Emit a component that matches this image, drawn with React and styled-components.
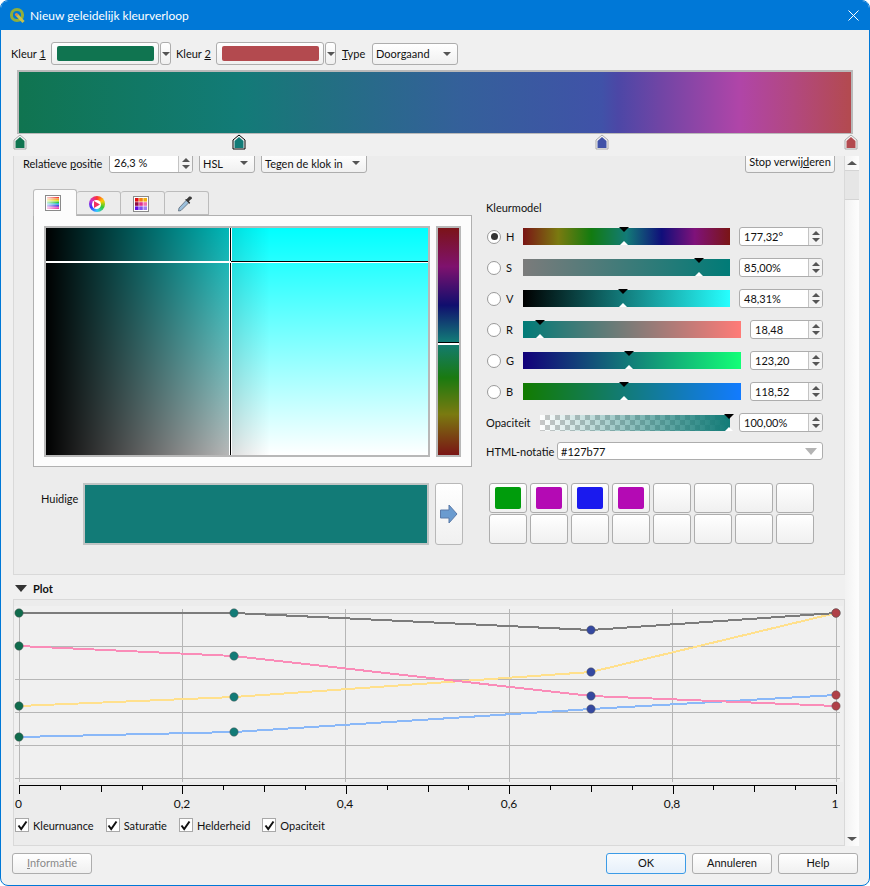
import React from 'react';
import styled, { createGlobalStyle } from 'styled-components';

const GlobalStyle = createGlobalStyle`
  html, body { margin: 0; padding: 0; background: #fff; }
  body { font-family: Lato, "Noto Sans", sans-serif; font-size: 11px; color: #111; }
  * { box-sizing: border-box; }
`;

const Window = styled.div`
  width: 870px;
  height: 886px;
  display: flex;
  flex-direction: column;
  background: #f0f0f0;
  border: 1px solid #0078d7;
  border-radius: 8px;
  overflow: hidden;
`;

const TitleBar = styled.div`
  flex: none;
  height: 30px;
  margin-top: -1px;
  display: flex;
  align-items: center;
  gap: 4px;
  padding: 0 10px 0 8px;
  background: #0078d7;
  color: #fff;
  font-size: 12px;
`;

const TitleText = styled.span`
  flex: 1;
`;

const TopRow = styled.div`
  flex: none;
  display: flex;
  align-items: center;
  height: 23px;
  margin-top: 12px;
  padding-left: 10px;
`;

const RowLabel = styled.span`
  width: ${p => p.$width}px;
  flex: none;
  white-space: nowrap;
`;

const ColorButton = styled.div`
  width: 108px;
  height: 23px;
  padding: 3px 4px 3px 5px;
  margin-right: 1px;
  background: linear-gradient(#fff, #f0f0f0);
  border: 1px solid #adadad;
  border-radius: 3px;
`;

const ColorFill = styled.div`
  height: 100%;
  border-radius: 2px;
  background: ${p => p.$color};
`;

const DropButton = styled.div`
  width: 11px;
  height: 23px;
  margin-right: ${p => p.$gap}px;
  display: flex;
  align-items: center;
  justify-content: center;
  background: linear-gradient(#fff, #f0f0f0);
  border: 1px solid #adadad;
  border-radius: 3px;
`;

const Arrow = styled.i`
  display: block;
  flex: none;
  width: 0;
  height: 0;
  border-left: ${p => p.$size || 4}px solid transparent;
  border-right: ${p => p.$size || 4}px solid transparent;
  border-top: ${p => p.$h || 4}px solid ${p => p.$color || '#555'};
  border-bottom: 0;
`;

const ArrowUp = styled(Arrow)`
  border-top: 0;
  border-bottom: ${p => p.$h || 4}px solid ${p => p.$color || '#555'};
`;

const Combo = styled.div`
  width: ${p => p.$width}px;
  height: ${p => p.$height || 20}px;
  margin-right: ${p => p.$gap || 0}px;
  flex: none;
  display: flex;
  align-items: center;
  justify-content: space-between;
  padding: 0 6px 0 3px;
  background: linear-gradient(#fff, #f0f0f0);
  border: 1px solid #adadad;
  border-radius: 3px;
  white-space: nowrap;
`;

const GradientBar = styled.div`
  flex: none;
  width: 836px;
  height: 64px;
  margin: 5px 0 0 16px;
  border: 2px solid #b9b9b9;
  border-bottom-width: 1px;
  background: linear-gradient(to right,
    #107450 0%, #127b77 26.4%, #20717f 35%, #34609a 53%, #4052a8 70%, #4c47a6 72%,
    #7045a5 77%, #b045a8 86.6%, #b24880 93%, #b34a4f 100%);
`;

const StopTrack = styled.div`
  flex: none;
  position: relative;
  height: 16px;
  margin: 0 0 6px 0;
`;

const StopMarker = styled.svg`
  position: absolute;
  top: 0;
  left: ${p => p.$x - 7}px;
`;

const Middle = styled.div`
  flex: 1;
  min-height: 0;
  display: flex;
  padding: 0 10px 0 12px;
`;

const ScrollArea = styled.div`
  flex: none;
  width: 832px;
  height: 690px;
  overflow: hidden;
  display: flex;
  flex-direction: column;
`;

const Upper = styled.div`
  flex: none;
  height: 419px;
  background: #ececec;
  border: 1px solid #d9d9d9;
  border-top: 0;
`;

const OptionsRow = styled.div`
  display: flex;
  align-items: center;
  height: 20px;
  margin-top: -3px;
  padding: 0 9px;
`;

const StopButton = styled.div`
  margin-left: auto;
  width: 90px;
  height: 20px;
  text-align: center;
  line-height: 16px;
  background: linear-gradient(#fff, #f0f0f0);
  border: 1px solid #adadad;
  border-radius: 3px;
  white-space: nowrap;
`;

const Columns = styled.div`
  display: flex;
  gap: 14px;
  margin-top: 16px;
  padding-left: 19px;
`;

const LeftColumn = styled.div`
  width: 439px;
  flex: none;
`;

const TabBar = styled.div`
  display: flex;
  align-items: flex-end;
  height: 26px;
`;

const Tab = styled.div`
  position: relative;
  width: 44px;
  height: ${p => (p.$active ? 27 : 24)}px;
  margin-bottom: ${p => (p.$active ? -1 : 0)}px;
  padding: ${p => (p.$active ? 5 : 4)}px 4px 0 0;
  display: flex;
  justify-content: center;
  background: ${p => (p.$active ? '#fcfcfc' : '#ececec')};
  border: 1px solid #bcbcbc;
  border-bottom: ${p => (p.$active ? 0 : '1px solid #bcbcbc')};
  border-left: ${p => (p.$active ? '1px solid #bcbcbc' : 0)};
  border-radius: 3px 3px 0 0;
  z-index: ${p => (p.$active ? 1 : 0)};
`;

const Wheel = styled.div`
  width: 16px;
  height: 16px;
  border-radius: 50%;
  display: flex;
  align-items: center;
  justify-content: center;
  background: conic-gradient(#f33, #fc0, #3c3, #3cf, #33f, #c3c, #f33);
`;

const WheelCenter = styled.div`
  width: 9px;
  height: 9px;
  border-radius: 50%;
  background: #fff;
  display: flex;
  align-items: center;
  justify-content: center;
`;

const TabPane = styled.div`
  height: 252px;
  display: flex;
  gap: 6px;
  padding: 10px 10px 9px;
  background: #fcfcfc;
  border: 1px solid #b0b0b0;
`;

const BoxFrame = styled.div`
  position: relative;
  width: 386px;
  height: 231px;
  border: 2px solid #b8b8b8;
  background:
    linear-gradient(to right, #000 0, rgba(0,0,0,.28) 48%, rgba(0,0,0,.13) 48.8%, rgba(0,0,0,0) 58.6%),
    linear-gradient(to bottom, #00ffff, #fff);
`;

const CrossV = styled.div`
  position: absolute;
  top: 0;
  bottom: 0;
  left: 183px;
  width: 3px;
  background: linear-gradient(to right, #fff 33%, #000 33%, #000 66%, #fff 66%);
`;

const CrossH = styled.div`
  position: absolute;
  left: 0;
  right: 0;
  top: 33px;
  height: 2px;
  background:
    linear-gradient(to right, #fff 48.5%, #000 48.5%) top / 100% 1px no-repeat,
    #fff;
`;

const HueFrame = styled.div`
  position: relative;
  width: 25px;
  height: 231px;
  border: 2px solid #b8b8b8;
  background: linear-gradient(to bottom,
    #7b1318 0%, #7f126e 17%, #100e6e 34%, #127b77 50%, #1a7a10 66%, #7a7a10 82%, #7a1515 100%);
`;

const HueMark = styled.div`
  position: absolute;
  left: 0;
  right: 0;
  top: 114px;
  height: 3px;
  background: linear-gradient(#000 33%, #fff 33%);
`;

const CurrentRow = styled.div`
  display: flex;
  margin-top: 16px;
  padding-left: 8px;
`;

const CurrentLabel = styled.span`
  width: 42px;
  flex: none;
  padding-top: 9px;
`;

const Preview = styled.div`
  width: 346px;
  height: 62px;
  flex: none;
  background: #127b77;
  border: 2px solid #c0c4c4;
`;

const ArrowButton = styled.div`
  width: 28px;
  height: 62px;
  flex: none;
  margin-left: 6px;
  display: flex;
  align-items: center;
  justify-content: center;
  background: linear-gradient(#fff, #f0f0f0);
  border: 1px solid #b8b8b8;
  border-radius: 3px;
`;

const RightColumn = styled.div`
  width: 337px;
  flex: none;
`;

const ModelTitle = styled.div`
  height: 20px;
  margin: 10px 0 8px;
  line-height: 18px;
`;

const ModelRow = styled.div`
  display: flex;
  align-items: center;
  height: 19px;
  margin-bottom: 12px;
`;

const Radio = styled.span`
  width: 14px;
  height: 14px;
  flex: none;
  margin-left: 1px;
  display: flex;
  align-items: center;
  justify-content: center;
  border: 1px solid #9a9a9a;
  border-radius: 50%;
  background: #fff;
`;

const RadioDot = styled.span`
  width: 7px;
  height: 7px;
  border-radius: 50%;
  background: #333;
`;

const ChannelName = styled.span`
  width: 22px;
  flex: none;
  padding-left: 5px;
`;

const SliderBar = styled.div`
  position: relative;
  flex: 1;
  height: 17px;
  margin-right: 9px;
  background: ${p => p.$bg};
`;

const OpacityBar = styled(SliderBar)`
  height: 16px;
  background:
    linear-gradient(to right, rgba(18,123,119,0), #127b77),
    conic-gradient(#c8c8c8 25%, #fff 25% 50%, #c8c8c8 50% 75%, #fff 75%) 0 0 / 10px 10px;
`;

const ThumbTop = styled.i`
  position: absolute;
  top: -1px;
  left: ${p => p.$pos - 5}px;
  width: 0;
  height: 0;
  border-left: 5px solid transparent;
  border-right: 5px solid transparent;
  border-top: 5px solid #000;
`;

const ThumbBottom = styled.i`
  position: absolute;
  bottom: 0;
  left: ${p => p.$pos - 4}px;
  width: 0;
  height: 0;
  border-left: 4px solid transparent;
  border-right: 4px solid transparent;
  border-bottom: 4px solid #fff;
`;

const Spin = styled.div`
  width: ${p => p.$width}px;
  height: ${p => p.$height || 19}px;
  margin-right: ${p => p.$gap || 0}px;
  flex: none;
  display: flex;
  background: #fff;
  border: 1px solid #adadad;
  border-radius: 3px;
  overflow: hidden;
`;

const SpinText = styled.span`
  flex: 1;
  padding-left: 4px;
  line-height: 17px;
  white-space: nowrap;
`;

const SpinButtons = styled.span`
  width: 14px;
  flex: none;
  display: flex;
  flex-direction: column;
  align-items: center;
  justify-content: center;
  gap: 3px;
  background: #f3f3f3;
  border-left: 1px solid #c4c4c4;
`;

const OpacityLabel = styled.span`
  width: 54px;
  flex: none;
`;

const HtmlRow = styled.div`
  display: flex;
  align-items: center;
  height: 18px;
  margin-top: -2px;
`;

const HtmlLabel = styled.span`
  width: 71px;
  flex: none;
  white-space: nowrap;
`;

const HtmlField = styled.div`
  flex: 1;
  height: 18px;
  display: flex;
  align-items: center;
  justify-content: space-between;
  padding: 0 5px 0 3px;
  background: #fff;
  border: 1px solid #adadad;
  border-radius: 3px;
`;

const SwatchGrid = styled.div`
  display: grid;
  grid-template-columns: repeat(8, 38px);
  grid-auto-rows: 30px;
  column-gap: 3px;
  row-gap: 1px;
  margin: 23px 0 0 3px;
`;

const Swatch = styled.div`
  padding: 3px 5px;
  background: linear-gradient(#fff, #f0f0f0);
  border: 1px solid #adadad;
  border-radius: 3px;
`;

const PlotHeader = styled.div`
  flex: none;
  height: 24px;
  display: flex;
  align-items: center;
  gap: 6px;
  padding: 3px 0 0 2px;
  font-weight: 700;
`;

const PlotBox = styled.div`
  flex: none;
  height: 247px;
  background: #ececec;
  border: 1px solid #d9d9d9;
`;

const PlotSvg = styled.svg`
  display: block;
`;

const CheckRow = styled.div`
  display: flex;
  align-items: center;
  height: 20px;
  padding-left: 1px;
`;

const CheckItem = styled.label`
  display: flex;
  align-items: center;
  gap: 4px;
  margin-right: 12px;
  white-space: nowrap;
`;

const CheckBox = styled.span`
  width: 14px;
  height: 14px;
  display: flex;
  align-items: center;
  justify-content: center;
  background: #fff;
  border: 1px solid #a8a8a8;
`;

const ScrollBar = styled.div`
  flex: none;
  width: 14px;
  height: 690px;
  display: flex;
  flex-direction: column;
  background: linear-gradient(to right, #f2f2f2, #fdfdfd);
`;

const ScrollButton = styled.div`
  height: 14px;
  flex: none;
  display: flex;
  align-items: center;
  justify-content: center;
`;

const ScrollThumb = styled.div`
  height: 30px;
  flex: none;
  background: #e6e6e6;
  border-top: 1px solid #d4d4d4;
  border-bottom: 1px solid #d4d4d4;
`;

const ScrollGap = styled.div`
  flex: 1;
`;

const Footer = styled.div`
  flex: none;
  display: flex;
  gap: 6px;
  height: 21px;
  margin: 7px 0 11px;
  padding: 0 11px;
`;

const FooterButton = styled.div`
  width: 80px;
  height: 21px;
  text-align: center;
  line-height: 18px;
  background: ${p => (p.$primary ? 'linear-gradient(#f8fbfe, #e6f0fa)' : 'linear-gradient(#fff, #f0f0f0)')};
  border: 1px solid ${p => (p.$primary ? '#3c9be6' : '#adadad')};
  border-radius: 3px;
  color: ${p => (p.$disabled ? '#8a8a8a' : '#111')};
  margin-right: ${p => (p.$push ? 'auto' : 0)};
`;

function QgisLogo() {
  return (
    <svg width="17" height="17" viewBox="0 0 17 17">
      <circle cx="8" cy="8" r="5.6" fill="none" stroke="#8fae3c" strokeWidth="3" />
      <path d="M8 8 L14.5 15" stroke="#c9c24a" strokeWidth="3" />
      <circle cx="7.5" cy="7.5" r="1.6" fill="#e08a3c" />
    </svg>
  );
}

function CloseIcon() {
  return (
    <svg width="11" height="11" viewBox="0 0 11 11">
      <path d="M0.5 0.5 L10.5 10.5 M10.5 0.5 L0.5 10.5" stroke="#fff" strokeWidth="1" />
    </svg>
  );
}

function Stop({ x, color, line = '#aaa' }) {
  return (
    <StopMarker $x={x} width="14" height="16" viewBox="0 0 14 16">
      <path d="M7 1 L13 6 L13 15 L1 15 L1 6 Z" fill="#f4f4f4" stroke={line} strokeWidth="1" />
      <path d="M7 3 L11.5 7 L11.5 14 L2.5 14 L2.5 7 Z" fill={color} />
    </StopMarker>
  );
}

function SpinBox({ value, width, height, gap }) {
  return (
    <Spin $width={width} $height={height} $gap={gap}>
      <SpinText>{value}</SpinText>
      <SpinButtons>
        <ArrowUp $size={4} />
        <Arrow $size={4} />
      </SpinButtons>
    </Spin>
  );
}

function GradientIcon() {
  const rows = ['#f03030', '#f0a020', '#e0e020', '#30c030', '#20c0c0', '#3050e0', '#a030d0', '#f030a0'];
  return (
    <svg width="16" height="16" viewBox="0 0 16 16">
      <defs>
        <linearGradient id="washout" x1="0" x2="1" y1="0" y2="0">
          <stop offset="0" stopColor="#fff" stopOpacity="0.75" />
          <stop offset="1" stopColor="#fff" stopOpacity="0" />
        </linearGradient>
      </defs>
      <rect width="16" height="16" fill="#fff" />
      {rows.map((c, i) => (
        <rect key={c} x="2" y={2 + i * 1.5} width="12" height="1.5" fill={c} />
      ))}
      <rect x="2" y="2" width="12" height="12" fill="url(#washout)" />
      <rect x="0.5" y="0.5" width="15" height="15" fill="none" stroke="#8a8a8a" />
    </svg>
  );
}

function PaletteIcon() {
  const cells = ['#e01010', '#f08010', '#f0b010', '#901040', '#e03090', '#f070b0', '#6010e0', '#8050f0', '#a080f0'];
  return (
    <svg width="16" height="16" viewBox="0 0 16 16">
      <rect width="16" height="16" fill="#fff" />
      {cells.map((c, i) => (
        <rect key={i} x={2 + (i % 3) * 4.2} y={2 + Math.floor(i / 3) * 4.2} width="3.6" height="3.6" fill={c} />
      ))}
      <rect x="0.5" y="0.5" width="15" height="15" fill="none" stroke="#8a8a8a" />
    </svg>
  );
}

function DropperIcon() {
  return (
    <svg width="16" height="16" viewBox="0 0 16 16">
      <path d="M9.5 4 L12 6.5 L4 14.5 L1.5 15 L2 12 Z" fill="#9cc0dc" stroke="#5a6a78" strokeWidth="0.8" />
      <path d="M8 3.5 L12.5 8 L13.2 6.6 L11.8 5.2 L15 2.6 A2 2 0 0 0 12.2 0.6 L9.8 3 Z" fill="#3a3a3a" />
    </svg>
  );
}

const channels = [
  { name: 'H', checked: true, pos: 101, spin: '177,32°', w: 84,
    bg: 'linear-gradient(to right, #7a1515, #7a7a10 17%, #127b10 33%, #127b77 50%, #100e7a 67%, #7f127a 83%, #7a1515)' },
  { name: 'S', pos: 176, spin: '85,00%', w: 84, bg: 'linear-gradient(to right, #7b7b7b, #007b77)' },
  { name: 'V', pos: 100, spin: '48,31%', w: 84, bg: 'linear-gradient(to right, #000, #26ffff)' },
  { name: 'R', pos: 17, spin: '18,48', w: 73, bg: 'linear-gradient(to right, #007b77, #ff7b77)' },
  { name: 'G', pos: 106, spin: '123,20', w: 73, bg: 'linear-gradient(to right, #12007a, #12ff77)' },
  { name: 'B', pos: 101, spin: '118,52', w: 73, bg: 'linear-gradient(to right, #127b00, #127bff)' },
];

const swatches = ['#009c0c', '#b40ab4', '#1a1aee', '#b40ab4', null, null, null, null, null, null, null, null, null, null, null, null];

const stopsX = [19, 234, 591, 836];
const stopColors = ['#0f6b4c', '#127b77', '#3448a0', '#b04048'];
const series = [
  { color: '#ffe08c', y: [706, 697, 672, 613] },
  { color: '#8ab8f8', y: [737, 732, 709, 695] },
  { color: '#fa8cb8', y: [646, 656, 696, 706] },
  { color: '#7c7c7c', y: [613, 613, 630, 613] },
];
const gridY = [613, 646, 679, 712, 745, 778];
const gridX = [19, 182, 345, 509, 672, 836];
const axisLabels = ['0', '0,2', '0,4', '0,6', '0,8', '1'];
const ticks = Array.from({ length: 21 }, (_, i) => i);

function Plot() {
  return (
    <PlotSvg width="829" height="215" viewBox="14 600 829 215">
      <rect x="14" y="606" width="829" height="176" fill="#f0f0f0" />
      {gridY.map(y => (
        <line key={y} x1="15" x2="840" y1={y + 0.5} y2={y + 0.5} stroke="#b6b6b6" />
      ))}
      {gridX.map(x => (
        <line key={x} x1={x + 0.5} x2={x + 0.5} y1="609" y2="782" stroke="#b6b6b6" />
      ))}
      {series.map(s => (
        <polyline
          key={s.color}
          points={s.y.map((y, i) => `${stopsX[i]},${y}`).join(' ')}
          fill="none"
          stroke={s.color}
          strokeWidth="2"
          shapeRendering="crispEdges"
        />
      ))}
      {series.map(s => s.y.map((y, i) => (
        <circle key={`${s.color}${i}`} cx={stopsX[i]} cy={y} r="4.2" fill={stopColors[i]} stroke="#555" strokeOpacity="0.45" />
      )))}
      <line x1="19" x2="837" y1="785.5" y2="785.5" stroke="#000" />
      {ticks.map(i => {
        const x = Math.round(19 + i * 40.85) + 0.5;
        const len = i % 4 === 0 ? 9 : i % 2 === 0 ? 7 : 5;
        return <line key={i} x1={x} x2={x} y1="785" y2={785 + len} stroke="#000" />;
      })}
      {axisLabels.map((t, i) => (
        <text
          key={t}
          x={i === 0 ? 18.5 : i === 5 ? 835 : gridX[i]}
          y="808"
          textAnchor="middle"
          fontSize="12"
          fontFamily="Lato, sans-serif"
          fill="#111"
        >
          {t}
        </text>
      ))}
    </PlotSvg>
  );
}

export default function App() {
  return (
    <>
      <GlobalStyle />
      <Window>
        <TitleBar>
          <QgisLogo />
          <TitleText>Nieuw geleidelijk kleurverloop</TitleText>
          <CloseIcon />
        </TitleBar>

        <TopRow>
          <RowLabel $width={40}>Kleur <u>1</u></RowLabel>
          <ColorButton><ColorFill $color="#107450" /></ColorButton>
          <DropButton $gap={5}><Arrow $size={4} /></DropButton>
          <RowLabel $width={40}>Kleur <u>2</u></RowLabel>
          <ColorButton><ColorFill $color="#b34a4f" /></ColorButton>
          <DropButton $gap={6}><Arrow $size={4} /></DropButton>
          <RowLabel $width={30}><u>T</u>ype</RowLabel>
          <Combo $width={86} $height={22}>Doorgaand <Arrow $size={4} /></Combo>
        </TopRow>

        <GradientBar />
        <StopTrack>
          <Stop x={19} color="#107450" />
          <Stop x={238} color="#127b77" line="#000" />
          <Stop x={601} color="#4052a8" />
          <Stop x={850} color="#b34a4f" />
        </StopTrack>

        <Middle>
          <ScrollArea>
            <Upper>
              <OptionsRow>
                <RowLabel $width={86}>Relatieve <u>p</u>ositie</RowLabel>
                <SpinBox value="26,3 %" width={84} height={20} gap={6} />
                <Combo $width={56} $gap={6}>HSL <Arrow $size={4} /></Combo>
                <Combo $width={106}>Tegen de klok in <Arrow $size={4} /></Combo>
                <StopButton>Stop verwij<u>d</u>eren</StopButton>
              </OptionsRow>

              <Columns>
                <LeftColumn>
                  <TabBar>
                    <Tab $active><GradientIcon /></Tab>
                    <Tab><Wheel><WheelCenter><svg width="6" height="7" viewBox="0 0 6 7"><path d="M0 0 L6 3.5 L0 7 Z" fill="#f03060" /></svg></WheelCenter></Wheel></Tab>
                    <Tab><PaletteIcon /></Tab>
                    <Tab><DropperIcon /></Tab>
                  </TabBar>
                  <TabPane>
                    <BoxFrame>
                      <CrossV />
                      <CrossH />
                    </BoxFrame>
                    <HueFrame><HueMark /></HueFrame>
                  </TabPane>
                  <CurrentRow>
                    <CurrentLabel>Huidige</CurrentLabel>
                    <Preview />
                    <ArrowButton>
                      <svg width="18" height="20" viewBox="0 0 18 20">
                        <path d="M0.5 6 L9 6 L9 1 L17 10 L9 19 L9 14 L0.5 14 Z" fill="#6a9bcf" stroke="#5a7aa8" />
                      </svg>
                    </ArrowButton>
                  </CurrentRow>
                </LeftColumn>

                <RightColumn>
                  <ModelTitle>Kleurmodel</ModelTitle>
                  {channels.map(c => (
                    <ModelRow key={c.name}>
                      <Radio>{c.checked && <RadioDot />}</Radio>
                      <ChannelName>{c.name}</ChannelName>
                      <SliderBar $bg={c.bg}>
                        <ThumbTop $pos={c.pos} />
                        <ThumbBottom $pos={c.pos} />
                      </SliderBar>
                      <SpinBox value={c.spin} width={c.w} />
                    </ModelRow>
                  ))}
                  <ModelRow>
                    <OpacityLabel>Opaciteit</OpacityLabel>
                    <OpacityBar>
                      <ThumbTop $pos={189} />
                      <ThumbBottom $pos={189} />
                    </OpacityBar>
                    <SpinBox value="100,00%" width={84} />
                  </ModelRow>
                  <HtmlRow>
                    <HtmlLabel>HTML-notatie</HtmlLabel>
                    <HtmlField>#127b77 <Arrow $size={6} $h={7} $color="#b4b4b4" /></HtmlField>
                  </HtmlRow>
                  <SwatchGrid>
                    {swatches.map((c, i) => (
                      <Swatch key={i}>{c && <ColorFill $color={c} />}</Swatch>
                    ))}
                  </SwatchGrid>
                </RightColumn>
              </Columns>
            </Upper>

            <PlotHeader>
              <Arrow $size={6} $h={7} $color="#333" />
              <span>Plot</span>
            </PlotHeader>
            <PlotBox>
              <Plot />
              <CheckRow>
                {['Kleurnuance', 'Saturatie', 'Helderheid', 'Opaciteit'].map(label => (
                  <CheckItem key={label}>
                    <CheckBox>
                      <svg width="11" height="11" viewBox="0 0 11 11">
                        <path d="M1.5 5.5 L4.2 9 L9.5 1.5" fill="none" stroke="#111" strokeWidth="2" />
                      </svg>
                    </CheckBox>
                    {label}
                  </CheckItem>
                ))}
              </CheckRow>
            </PlotBox>
          </ScrollArea>

          <ScrollBar>
            <ScrollButton><ArrowUp $size={5} $h={4} $color="#555" /></ScrollButton>
            <ScrollThumb />
            <ScrollGap />
            <ScrollButton><Arrow $size={5} $h={4} $color="#555" /></ScrollButton>
          </ScrollBar>
        </Middle>

        <Footer>
          <FooterButton $disabled $push><u>I</u>nformatie</FooterButton>
          <FooterButton $primary>OK</FooterButton>
          <FooterButton>Annuleren</FooterButton>
          <FooterButton>Help</FooterButton>
        </Footer>
      </Window>
    </>
  );
}
